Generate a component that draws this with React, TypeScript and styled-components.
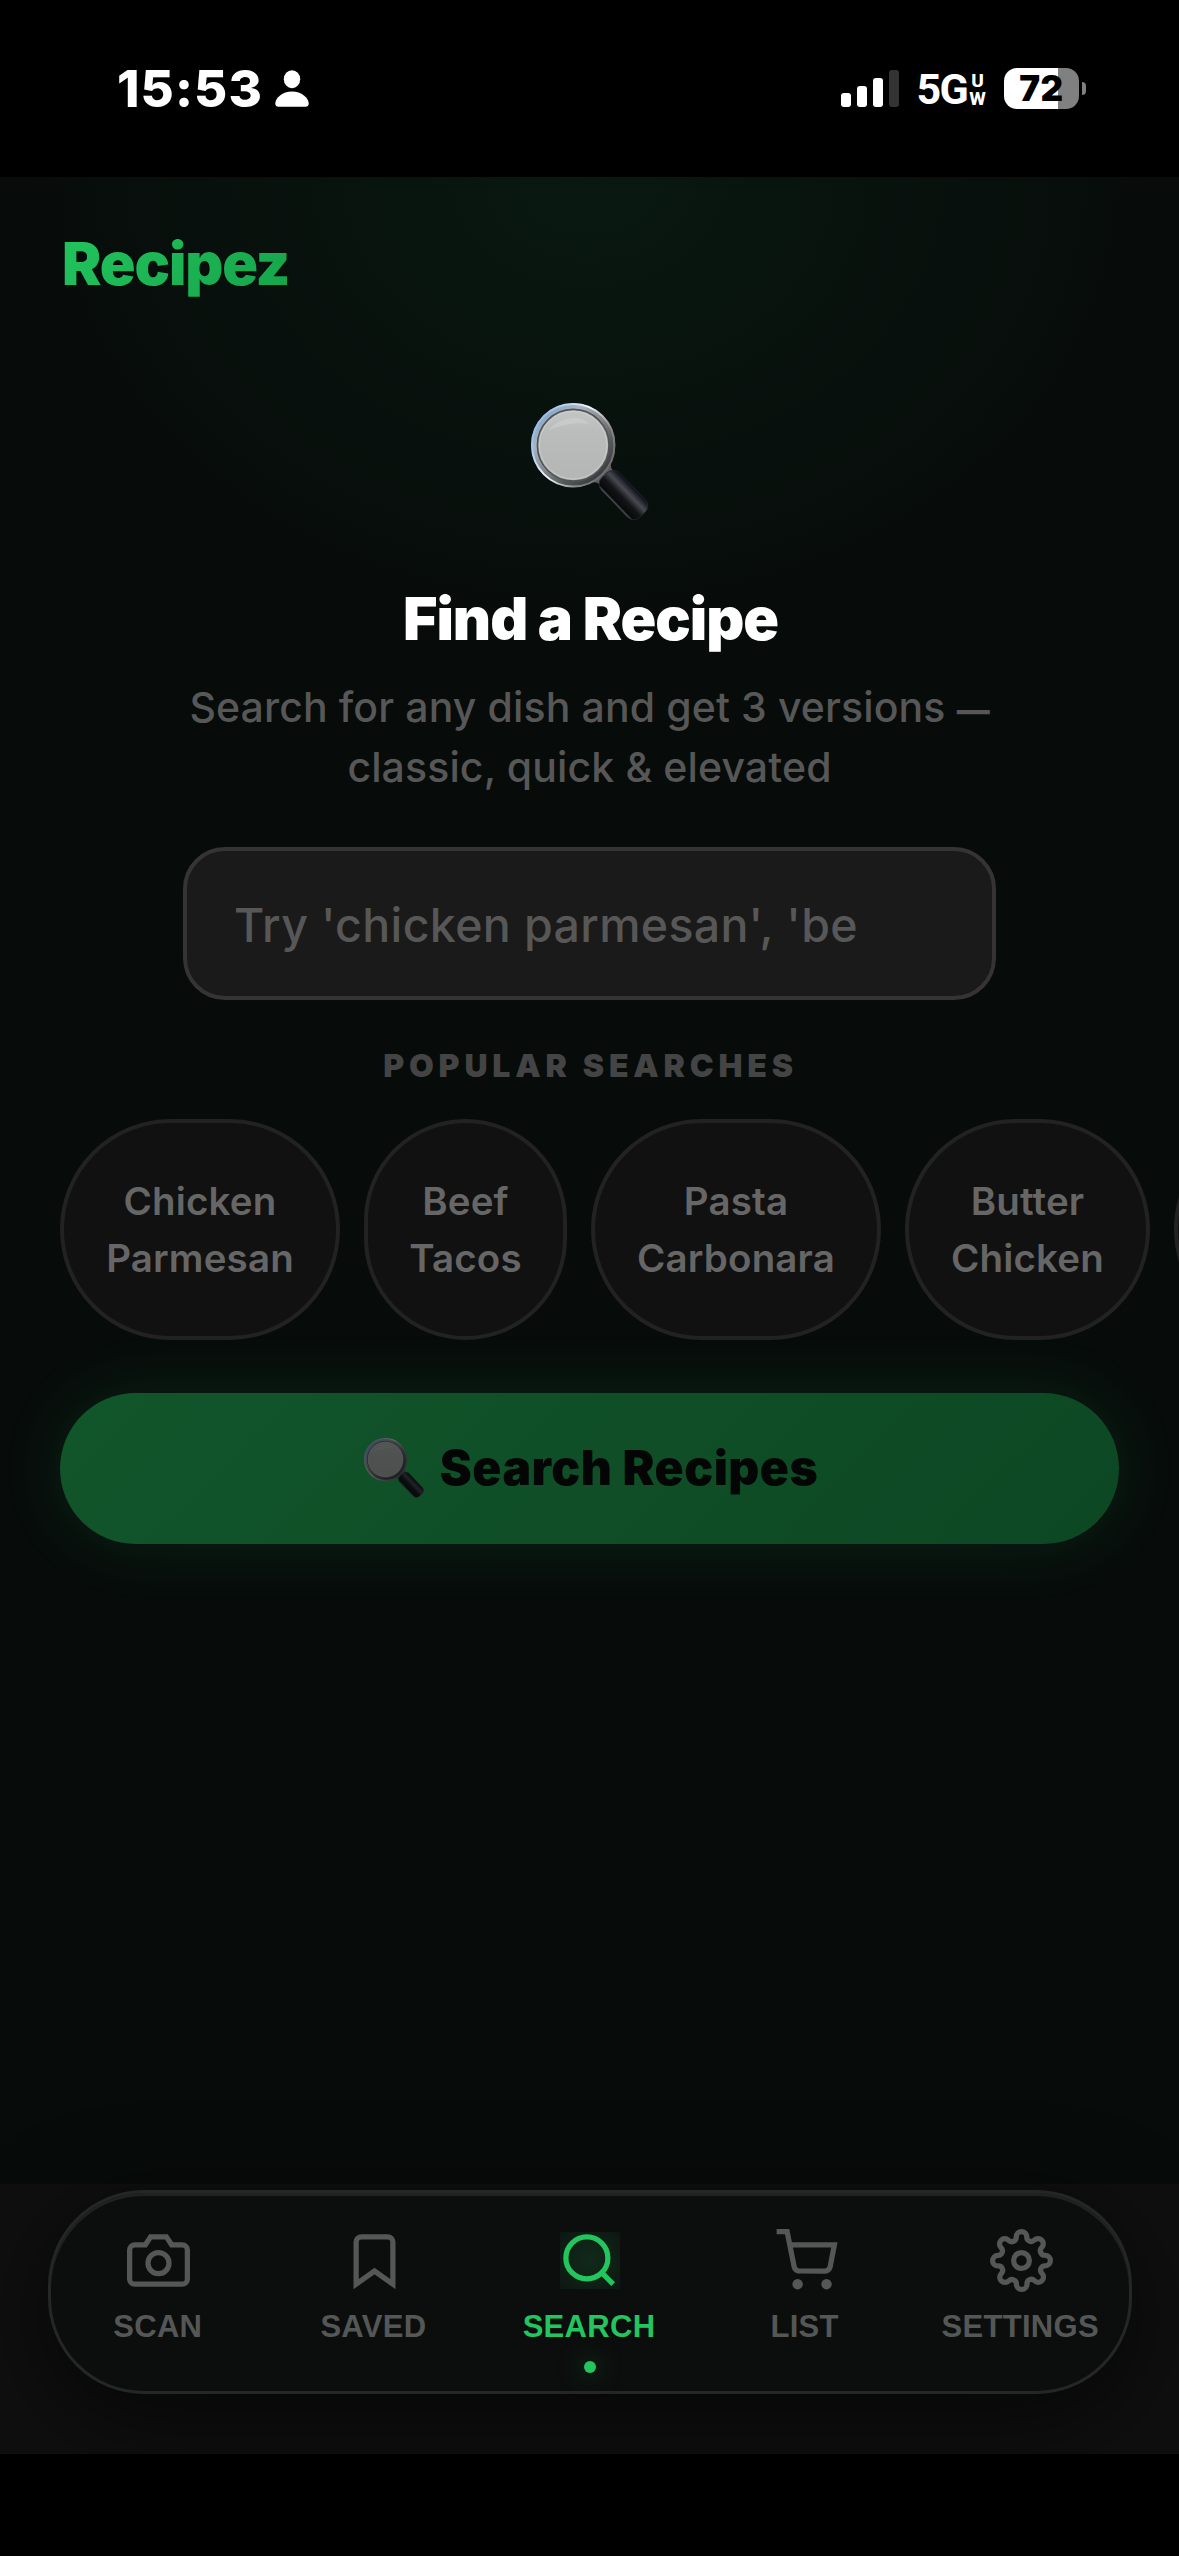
import React from "react";
import styled, { createGlobalStyle, css } from "styled-components";

const sans = `Inter, "Liberation Sans", sans-serif`;

const GlobalStyle = createGlobalStyle`
  * { box-sizing: border-box; }
  html, body { margin: 0; background: #000; }
  body { font-family: ${sans}; overflow: hidden; }
`;

const Screen = styled.div`
  width: 1179px;
  height: 2556px;
  display: flex;
  flex-direction: column;
  background: #000;
  overflow: hidden;
`;

/* ---------- status bar ---------- */

const StatusBar = styled.header`
  height: 177px;
  flex: none;
  display: flex;
  align-items: center;
  justify-content: space-between;
  padding: 0 93px 0 117px;
  color: #fff;
`;

const StatusGroup = styled.div`
  display: flex;
  align-items: center;
`;

const Clock = styled.span`
  font-size: 51px;
  font-weight: 800;
  line-height: 60px;
  letter-spacing: 1.1px;
  margin-right: 12px;
`;

const SignalBars = styled.div`
  display: flex;
  align-items: flex-end;
  gap: 6px;
  height: 37px;
  margin-right: 18px;
`;

const SignalBar = styled.span<{ $height: number; $dim?: boolean }>`
  width: 10px;
  height: ${(p) => p.$height}px;
  border-radius: 3px;
  background: ${(p) => (p.$dim ? "#333" : "#fff")};
`;

const Network = styled.span`
  font-family: Roboto, ${sans};
  font-size: 43px;
  font-weight: 700;
  line-height: 50px;
  letter-spacing: -1.8px;
  margin-right: 1px;
`;

const NetworkSuffix = styled.span`
  display: flex;
  flex-direction: column;
  align-items: center;
  width: 19px;
  font-family: Roboto, ${sans};
  font-size: 19px;
  font-weight: 800;
  line-height: 18px;
  margin-right: 17px;
  padding-top: 3px;
`;

const Battery = styled.div`
  display: flex;
  align-items: center;
  gap: 3px;
`;

const BatteryBody = styled.div`
  width: 75px;
  height: 41px;
  border-radius: 13px;
  display: flex;
  align-items: center;
  justify-content: center;
  background: linear-gradient(90deg, #fff 54px, #808080 54px);
  color: #000;
  font-size: 35px;
  font-weight: 900;
  letter-spacing: 0.6px;
  padding: 0 0 2px 0;
`;

const BatteryTip = styled.span`
  width: 4px;
  height: 13px;
  border-radius: 0 7px 7px 0;
  background: #808080;
`;

/* ---------- page ---------- */

const Page = styled.main`
  height: 2007px;
  flex: none;
  display: flex;
  flex-direction: column;
  align-items: center;
  background:
    radial-gradient(ellipse 600px 480px at 50% 0%, rgba(34, 197, 94, 0.075), rgba(34, 197, 94, 0)),
    #070b0a;
`;

const Brand = styled.h1`
  align-self: flex-start;
  margin: 52px 0 0 62px;
  font-size: 59px;
  font-weight: 900;
  line-height: 70px;
  letter-spacing: -1.1px;
  background: linear-gradient(135deg, #22c55e, #16a34a);
  background-clip: text;
  -webkit-background-clip: text;
  color: transparent;
`;

const HeroIcon = styled.div`
  width: 118px;
  height: 118px;
  margin: 104px 0 63px;
`;

const Title = styled.h2`
  margin: 0;
  font-size: 59px;
  font-weight: 900;
  line-height: 70px;
  letter-spacing: -1.05px;
  padding-left: 2px;
  color: #fff;
`;

const Subtitle = styled.p`
  margin: 23px 0 50px;
  font-size: 41px;
  font-weight: 500;
  line-height: 60px;
  letter-spacing: 0.12px;
  text-align: center;
  color: #575757;
`;

const Dash = styled.span`
  font-size: 33px;
  font-weight: 800;
  letter-spacing: 0;
  line-height: 1;
`;

const SearchField = styled.div`
  width: 813px;
  height: 153px;
  display: flex;
  align-items: center;
  padding: 0 132px 0 47px;
  border: 4px solid #353333;
  border-radius: 42px;
  background: #1a1a1a;
`;

const Placeholder = styled.span`
  flex: 1;
  overflow: hidden;
  white-space: nowrap;
  font-size: 46.5px;
  font-weight: 500;
  line-height: 64px;
  letter-spacing: 0.35px;
  color: #575757;
  padding-top: 3px;
`;

const SectionLabel = styled.h3`
  margin: 46px 0 33px;
  padding-left: 2px;
  font-size: 32px;
  font-weight: 900;
  line-height: 40px;
  letter-spacing: 4.8px;
  color: #444;
`;

const ChipRow = styled.div`
  align-self: stretch;
  display: flex;
  gap: 24px;
  padding-left: 60px;
  overflow: hidden;
  flex: none;
`;

const Chip = styled.button<{ $width: number }>`
  flex: none;
  width: ${(p) => p.$width}px;
  height: 221px;
  display: flex;
  flex-direction: column;
  align-items: center;
  justify-content: center;
  padding: 0;
  border: 4px solid #222;
  border-radius: 300px;
  background: #111;
  color: #666;
  font-family: ${sans};
  font-size: 38.5px;
  font-weight: 600;
  line-height: 57px;
  letter-spacing: 0.15px;
`;

const SearchButton = styled.button`
  width: 1059px;
  height: 151px;
  flex: none;
  margin-top: 53px;
  display: flex;
  align-items: center;
  justify-content: center;
  gap: 16px;
  padding: 0 0 2px 3px;
  border: 0;
  border-radius: 151px;
  background: linear-gradient(135deg, #22c55e, #16a34a);
  box-shadow: 0 0 66px rgba(34, 197, 94, 0.33);
  opacity: 0.4;
  color: #000;
  font-family: ${sans};
  font-size: 48px;
  font-weight: 900;
  line-height: 60px;
  letter-spacing: 0.5px;
`;

const ButtonIcon = styled.span`
  width: 60px;
  height: 60px;
  display: flex;
`;

/* ---------- bottom navigation ---------- */

const NavArea = styled.div`
  height: 270px;
  flex: none;
  padding: 6px 47px 0 48px;
  background: #0f0f0f;
`;

const Nav = styled.nav`
  position: relative;
  height: 204px;
  display: grid;
  grid-template-columns: repeat(5, 1fr);
  border: 3px solid #252726;
  border-radius: 96px;
  background: #0c0e0d;
  box-shadow:
    0 24px 96px rgba(0, 0, 0, 0.6),
    inset 0 3px 0 #202222;
`;

const NavItem = styled.a<{ $active?: boolean }>`
  display: flex;
  flex-direction: column;
  align-items: center;
  padding-top: 33px;
  color: ${(p) => (p.$active ? "#22c55e" : "#555756")};
`;

const NavIconBox = styled.span<{ $active?: boolean }>`
  width: 60px;
  height: 57px;
  margin: 6px 0;
  display: flex;
  align-items: center;
  justify-content: center;
  ${(p) =>
    p.$active &&
    css`
      background: radial-gradient(circle at 50% 50%, #10291a 0%, #0f2216 50%, #0d1611 100%);
    `}
`;

const NavSvg = styled.svg`
  flex: none;
  width: 63px;
  height: 63px;
  overflow: visible;
  fill: none;
  stroke: currentColor;
  stroke-width: 2;
`;

const NavLabel = styled.span`
  margin-top: 14px;
  padding-right: 2px;
  font-family: "Liberation Sans", Arial, sans-serif;
  font-size: 31px;
  font-weight: 700;
  line-height: 36px;
  letter-spacing: 0.3px;
`;

const ActiveDot = styled.span`
  width: 12px;
  height: 12px;
  margin-top: 16px;
  border-radius: 50%;
  background: #22c55e;
  box-shadow: 0 0 24px rgba(34, 197, 94, 0.5);
`;

/* ---------- drawings ---------- */

function Magnifier({ id }: { id: string }) {
  return (
    <svg width="100%" height="100%" viewBox="0 0 118 118">
      <defs>
        <linearGradient id={`${id}-rim`} x1="0.15" y1="0.1" x2="0.85" y2="0.9">
          <stop offset="0" stopColor="#8fa9c6" />
          <stop offset="0.2" stopColor="#a9b4c0" />
          <stop offset="0.5" stopColor="#85878a" />
          <stop offset="0.78" stopColor="#54575b" />
          <stop offset="1" stopColor="#3a3d42" />
        </linearGradient>
        <linearGradient id={`${id}-edge`} x1="0" y1="0.2" x2="1" y2="0.8">
          <stop offset="0" stopColor="#86b2e8" />
          <stop offset="0.45" stopColor="#eef4fa" />
          <stop offset="0.75" stopColor="#8a8688" />
          <stop offset="1" stopColor="#6b6462" />
        </linearGradient>
        <linearGradient id={`${id}-lens`} x1="0" y1="0" x2="0" y2="1">
          <stop offset="0" stopColor="#c3c6c5" />
          <stop offset="0.35" stopColor="#b9bcbb" />
          <stop offset="1" stopColor="#b4b6b5" />
        </linearGradient>
        <linearGradient id={`${id}-grip`} x1="0" y1="0" x2="0" y2="1">
          <stop offset="0" stopColor="#0b0d16" />
          <stop offset="0.32" stopColor="#474a50" />
          <stop offset="0.6" stopColor="#121417" />
          <stop offset="0.9" stopColor="#08090b" />
          <stop offset="1" stopColor="#63666b" />
        </linearGradient>
      </defs>
      <path d="M60 80 Q66 78 69 82 L83 68 Q79 66 80 58 L68 66Z" fill="#5a5e62" />
      <path d="M70 79 L80 69" stroke="#b8bcc0" strokeWidth="3" />
      <circle cx="42.2" cy="42.2" r="38" fill="none" stroke={`url(#${id}-rim)`} strokeWidth="8" />
      <circle cx="42.2" cy="42.2" r="41.2" fill="none" stroke={`url(#${id}-edge)`} strokeWidth="2" />
      <circle cx="42.2" cy="42.2" r="35.8" fill={`url(#${id}-lens)`} stroke="#505456" strokeWidth="1.6" />
      <circle cx="42.2" cy="42.2" r="33.8" fill="none" stroke="#d3d5d4" strokeWidth="1" opacity="0.65" />
      <path d="M17 28 Q28 14 46 15 Q54 16 58 21 Q38 18 17 28Z" fill="#d0d3d2" opacity="0.5" />
      <rect
        x="65"
        y="79.5"
        width="55"
        height="25"
        rx="9"
        fill={`url(#${id}-grip)`}
        stroke="#25272c"
        strokeWidth="0.8"
        transform="rotate(46 92.5 92)"
      />
    </svg>
  );
}

function PersonIcon() {
  return (
    <svg width="34" height="37" viewBox="0 0 34 37" fill="#fff">
      <ellipse cx="17" cy="9.2" rx="8.2" ry="9" />
      <path d="M17 21.5C7.500 21.500 0.300 28 0.300 33.500C0.300 35.800 1.500 36.700 3.500 36.700H30.500C32.500 36.700 33.700 35.800 33.700 33.500C33.700 28 26.500 21.500 17 21.500Z" />
    </svg>
  );
}

const navItems = [
  {
    label: "SCAN",
    icon: (
      <>
        <path d="M23 19a2 2 0 0 1-2 2H3a2 2 0 0 1-2-2V8a2 2 0 0 1 2-2h4l2-3h6l2 3h4a2 2 0 0 1 2 2z" />
        <circle cx="12" cy="13" r="4" />
      </>
    ),
  },
  {
    label: "SAVED",
    icon: <path d="M19 21l-7-5-7 5V5a2 2 0 0 1 2-2h10a2 2 0 0 1 2 2z" />,
  },
  {
    label: "SEARCH",
    active: true,
    icon: (
      <>
        <circle cx="11" cy="11" r="8" />
        <path d="M21 21l-4.350-4.350" />
      </>
    ),
  },
  {
    label: "LIST",
    icon: (
      <>
        <circle cx="9" cy="21" r="1" />
        <circle cx="20" cy="21" r="1" />
        <path d="M1 1h4l2.680 13.390a2 2 0 0 0 2 1.610h9.720a2 2 0 0 0 2-1.610L23 6H6" />
      </>
    ),
  },
  {
    label: "SETTINGS",
    icon: (
      <>
        <circle cx="12" cy="12" r="3" />
        <path d="M19.400 15a1.650 1.650 0 0 0 .330 1.820l.060.060a2 2 0 0 1 0 2.830 2 2 0 0 1-2.830 0l-.060-.060a1.650 1.650 0 0 0-1.820-.330 1.650 1.650 0 0 0-1 1.510V21a2 2 0 0 1-2 2 2 2 0 0 1-2-2v-.090A1.650 1.650 0 0 0 9 19.400a1.650 1.650 0 0 0-1.820.330l-.060.060a2 2 0 0 1-2.830 0 2 2 0 0 1 0-2.830l.060-.060a1.650 1.650 0 0 0 .330-1.820 1.650 1.650 0 0 0-1.510-1H3a2 2 0 0 1-2-2 2 2 0 0 1 2-2h.090A1.650 1.650 0 0 0 4.600 9a1.650 1.650 0 0 0-.330-1.820l-.060-.060a2 2 0 0 1 0-2.830 2 2 0 0 1 2.830 0l.060.060a1.650 1.650 0 0 0 1.820.330H9a1.650 1.650 0 0 0 1-1.510V3a2 2 0 0 1 2-2 2 2 0 0 1 2 2v.090a1.650 1.650 0 0 0 1 1.510 1.650 1.650 0 0 0 1.820-.330l.060-.060a2 2 0 0 1 2.830 0 2 2 0 0 1 0 2.830l-.060.060a1.650 1.650 0 0 0-.330 1.820V9a1.650 1.650 0 0 0 1.510 1H21a2 2 0 0 1 2 2 2 2 0 0 1-2 2h-.090a1.650 1.650 0 0 0-1.510 1z" />
      </>
    ),
  },
];

const chips = [
  { lines: ["Chicken", "Parmesan"], width: 280 },
  { lines: ["Beef", "Tacos"], width: 203 },
  { lines: ["Pasta", "Carbonara"], width: 290 },
  { lines: ["Butter", "Chicken"], width: 245 },
  { lines: [], width: 245 },
];

export default function App() {
  return (
    <Screen>
      <GlobalStyle />
      <StatusBar>
        <StatusGroup>
          <Clock>15:53</Clock>
          <PersonIcon />
        </StatusGroup>
        <StatusGroup>
          <SignalBars>
            <SignalBar $height={14} />
            <SignalBar $height={21} />
            <SignalBar $height={29} />
            <SignalBar $height={37} $dim />
          </SignalBars>
          <Network>5G</Network>
          <NetworkSuffix>
            <span>U</span>
            <span>W</span>
          </NetworkSuffix>
          <Battery>
            <BatteryBody>72</BatteryBody>
            <BatteryTip />
          </Battery>
        </StatusGroup>
      </StatusBar>

      <Page>
        <Brand>Recipez</Brand>
        <HeroIcon>
          <Magnifier id="hero" />
        </HeroIcon>
        <Title>Find a Recipe</Title>
        <Subtitle>
          Search for any dish and get 3 versions <Dash>—</Dash>
          <br />
          classic, quick &amp; elevated
        </Subtitle>
        <SearchField>
          <Placeholder>Try 'chicken parmesan', 'bee</Placeholder>
        </SearchField>
        <SectionLabel>POPULAR SEARCHES</SectionLabel>
        <ChipRow>
          {chips.map((chip, i) => (
            <Chip key={i} $width={chip.width}>
              {chip.lines.map((line) => (
                <span key={line}>{line}</span>
              ))}
            </Chip>
          ))}
        </ChipRow>
        <SearchButton>
          <ButtonIcon>
            <Magnifier id="cta" />
          </ButtonIcon>
          <span>Search Recipes</span>
        </SearchButton>
      </Page>

      <NavArea>
        <Nav>
          {navItems.map((item) => (
            <NavItem key={item.label} $active={item.active}>
              <NavIconBox $active={item.active}>
                <NavSvg viewBox="0 0 24 24">{item.icon}</NavSvg>
              </NavIconBox>
              <NavLabel>{item.label}</NavLabel>
              {item.active && <ActiveDot />}
            </NavItem>
          ))}
        </Nav>
      </NavArea>
    </Screen>
  );
}
